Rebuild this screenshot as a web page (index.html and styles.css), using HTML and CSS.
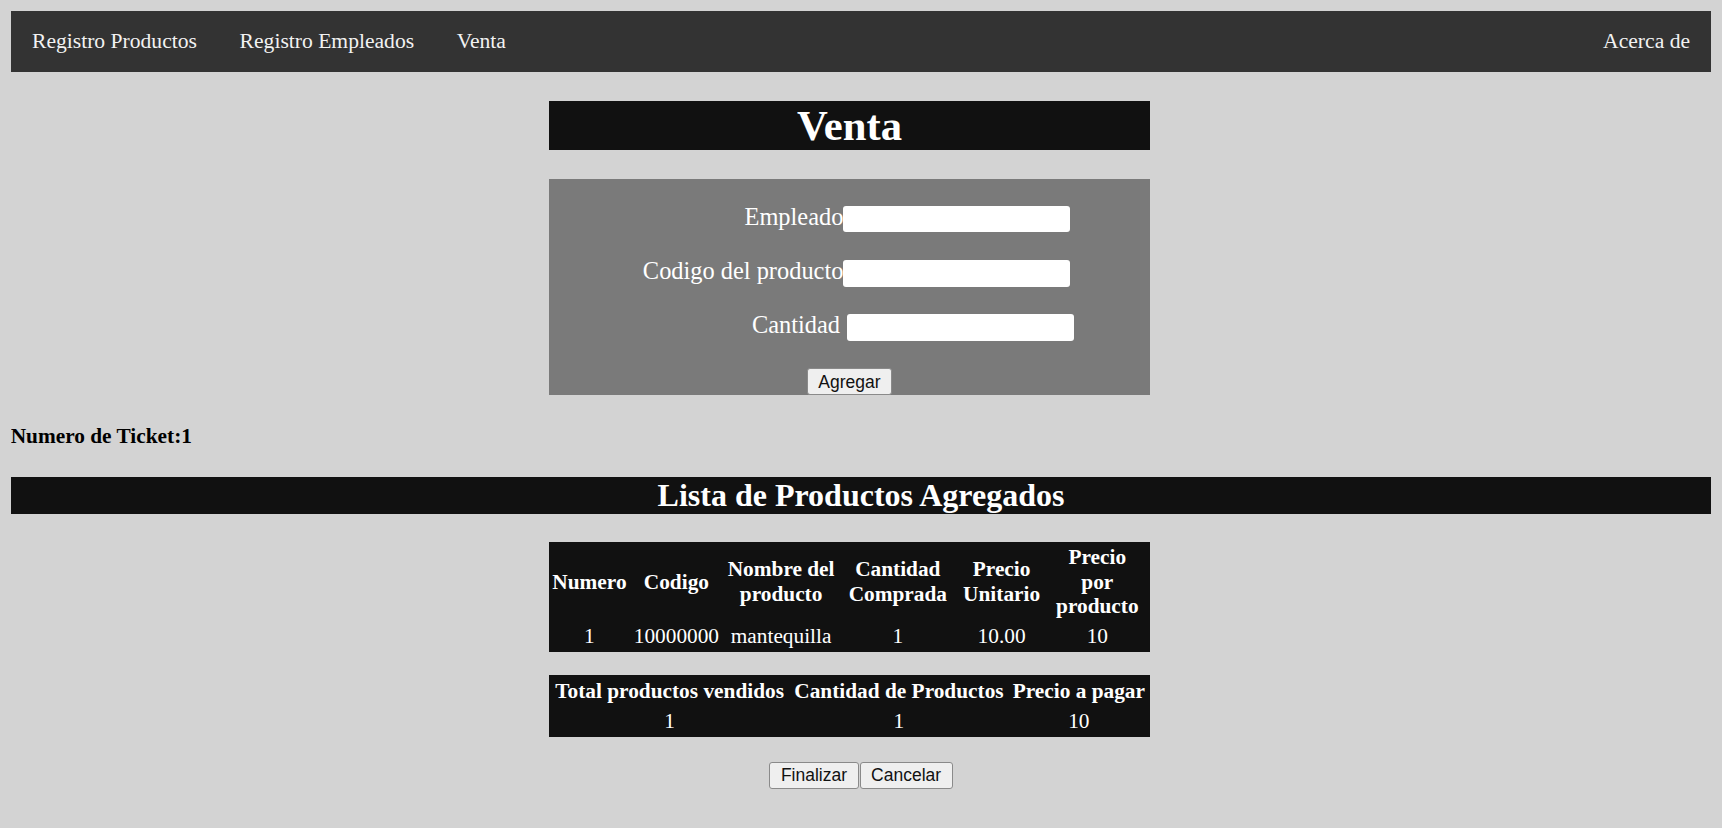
FILE: index.html
```html
<!DOCTYPE html>
<html lang="es">
<head>
<meta charset="utf-8">
<title>Venta</title>
<link rel="stylesheet" href="styles.css">
</head>
<body class="page">
  <nav class="topnav">
    <a class="topnav-link" href="#">Registro Productos</a>
    <a class="topnav-link" href="#">Registro Empleados</a>
    <a class="topnav-link" href="#">Venta</a>
    <a class="topnav-link topnav-right" href="#">Acerca de</a>
  </nav>

  <h1 class="title-box">Venta</h1>

  <form class="sale-form">
    <div class="form-row">
      <label class="form-label">Empleado</label>
      <input class="form-input" type="text">
    </div>
    <div class="form-row">
      <label class="form-label">Codigo del producto</label>
      <input class="form-input" type="text">
    </div>
    <div class="form-row">
      <label class="form-label form-label-narrow">Cantidad</label>
      <input class="form-input form-input-shift" type="text">
    </div>
    <div class="form-actions">
      <button class="btn" type="button">Agregar</button>
    </div>
  </form>

  <h4 class="ticket">Numero de Ticket:1</h4>

  <h2 class="list-bar">Lista de Productos Agregados</h2>

  <table class="data-table products-table">
    <tr>
      <th class="col-num">Numero</th>
      <th class="col-code">Codigo</th>
      <th class="col-name">Nombre del producto</th>
      <th class="col-qty">Cantidad Comprada</th>
      <th class="col-unit">Precio Unitario</th>
      <th class="col-total">Precio<br>por<br>producto</th>
    </tr>
    <tr>
      <td>1</td>
      <td>10000000</td>
      <td>mantequilla</td>
      <td>1</td>
      <td>10.00</td>
      <td>10</td>
    </tr>
  </table>

  <table class="data-table totals-table">
    <tr>
      <th>Total productos vendidos</th>
      <th>Cantidad de Productos</th>
      <th>Precio a pagar</th>
    </tr>
    <tr>
      <td>1</td>
      <td>1</td>
      <td>10</td>
    </tr>
  </table>

  <div class="final-actions">
    <button class="btn" type="button">Finalizar</button>
    <button class="btn" type="button">Cancelar</button>
  </div>
</body>
</html>
```
FILE: styles.css
```css
html {
  background: #d3d3d3;
}

.page {
  margin: 10.67px;
  background: #d3d3d3;
  font-family: "Liberation Serif", "Times New Roman", serif;
  font-size: 21.33px;
  line-height: 24.5px;
  color: #000;
}

/* Top navigation */
.topnav {
  display: flex;
  background: #333333;
  height: 61.33px;
}

.topnav-link {
  display: block;
  padding: 18.4px 21.33px;
  color: #f2f2f2;
  text-decoration: none;
  font-size: 21.6px;
  line-height: 24.5px;
}

.topnav-right {
  margin-left: auto;
}

/* Title box */
.title-box {
  width: 601px;
  margin: 28.6px 0 28.6px calc(50% - 312px);
  background: #111111;
  color: #ffffff;
  text-align: center;
  font-size: 42.67px;
  line-height: 49.4px;
  font-weight: bold;
}

/* Form */
.sale-form {
  width: 601px;
  margin-left: calc(50% - 312px);
  background: #7a7a7a;
  display: flex;
  flex-direction: column;
  gap: 26.3px;
  padding: 26.5px 0 0;
  box-sizing: border-box;
}

.form-row {
  display: flex;
  align-items: center;
  height: 28px;
}

.form-label {
  width: 294.4px;
  text-align: right;
  color: #ffffff;
  font-size: 24.4px;
  line-height: 27px;
  margin-bottom: 6px;
}

.form-label-narrow {
  width: 291px;
}

.form-input {
  width: 227px;
  height: 26.6px;
  box-sizing: border-box;
  border: none;
  border-radius: 3px;
  background: #ffffff;
  padding: 0 3px;
  margin: 0;
  font-family: "Liberation Sans", Arial, sans-serif;
  font-size: 17.78px;
}

.form-input-shift {
  margin-left: 6.7px;
}

.form-actions {
  display: flex;
  justify-content: center;
}

.btn {
  height: 27.5px;
  box-sizing: border-box;
  padding: 0 10.5px;
  margin: 0;
  background: #efefef;
  border: 1px solid #8a8a8a;
  border-radius: 3px;
  color: #111111;
  font-family: "Liberation Sans", Arial, sans-serif;
  font-size: 17.5px;
  line-height: 24px;
}

/* Ticket number */
.ticket {
  margin: 28.4px 0;
  font-size: 21.33px;
  line-height: 24.5px;
  font-weight: bold;
}

/* Section bar */
.list-bar {
  margin: 28.4px 0 27.5px;
  background: #111111;
  color: #ffffff;
  text-align: center;
  font-size: 32px;
  line-height: 37.3px;
  font-weight: bold;
}

/* Tables */
.data-table {
  width: 601px;
  margin-left: calc(50% - 312px);
  background: #111111;
  color: #ffffff;
  border-spacing: 2.67px;
  font-size: 21.33px;
  line-height: 24.6px;
}

.data-table th,
.data-table td {
  padding: 1.6px 1.33px;
  text-align: center;
}

.data-table th {
  font-weight: bold;
}

.data-table td {
  font-weight: normal;
}

.products-table {
  table-layout: fixed;
}

.products-table th {
  box-sizing: border-box;
}

.col-num { width: 76px; }
.col-code { width: 92.8px; }
.col-name { width: 111px; }
.col-qty { width: 116.6px; }
.col-unit { width: 85.4px; }
.col-total { width: 100.5px; }

.totals-table {
  margin-top: 23px;
}

.final-actions {
  display: flex;
  justify-content: center;
  gap: 1px;
  margin-top: 24.8px;
}
```
